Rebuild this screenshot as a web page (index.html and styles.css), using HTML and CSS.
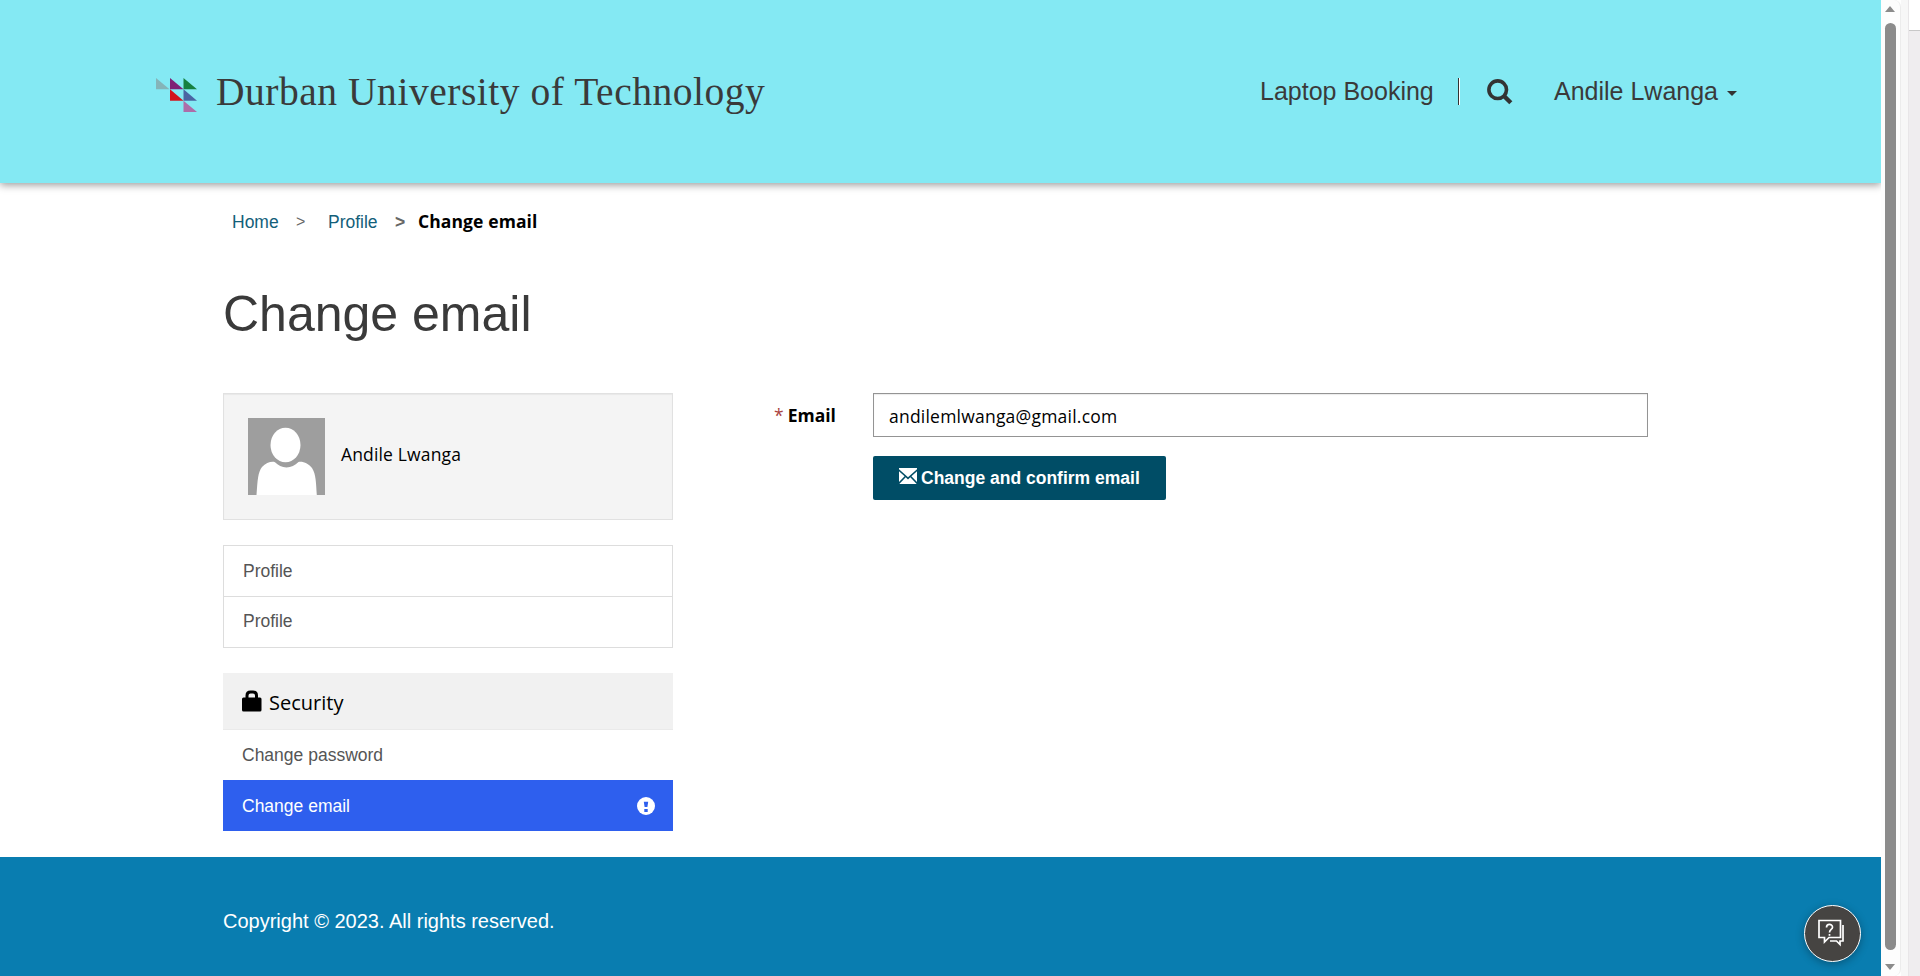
FILE: index.html
```
<!DOCTYPE html>
<html lang="en">
<head>
<meta charset="utf-8">
<title>Change email</title>
<link rel="stylesheet" href="styles.css">
</head>
<body>
<div class="window">
  <div class="page">
    <header class="header">
      <a class="brand">
        <svg class="brand-logo" width="41" height="34" viewBox="0 0 41 34">
          <path fill="#85b4b8" d="M0 0L13.5 11.3H0z"/>
          <path fill="#7f2176" d="M14 0L27.5 11.3H14z"/>
          <path fill="#168040" d="M27.5 0L41 11.3H27.5z"/>
          <path fill="#d2151c" d="M14 11.3L27.5 22.8H14z"/>
          <path fill="#4a64a2" d="M27.5 11.3L41 22.8H27.5z"/>
          <path fill="#ad6da9" d="M27.5 22.8L41 34H27.5z"/>
        </svg>
        <span class="brand-name">Durban University of Technology</span>
      </a>
      <nav class="nav">
        <a class="nav-booking">Laptop Booking</a>
        <span class="nav-divider"></span>
        <svg class="nav-search" width="26" height="26" viewBox="0 0 26 26" fill="none" stroke="#333"><circle cx="10.7" cy="10.7" r="8.8" stroke-width="3.6"/><path d="M17 17l6.8 6.8" stroke-width="4.4"/></svg>
        <a class="nav-user">Andile Lwanga</a>
        <span class="caret"></span>
      </nav>
    </header>
    <main class="content">
      <div class="crumbs">
        <a class="crumb-home">Home</a><span class="crumb-sep">&gt;</span><a class="crumb-profile">Profile</a><span class="crumb-sep-bold">&gt;</span><span class="crumb-current">Change email</span>
      </div>
      <h1 class="title">Change email</h1>
      <div class="columns">
        <aside class="side">
          <div class="user-card">
            <svg class="avatar" width="77" height="77" viewBox="0 0 77 77"><path fill="#9e9e9e" d="M0 0h77v77H0z"/><ellipse cx="37.5" cy="27" rx="15" ry="17.2" fill="#fff"/><path fill="#fff" d="M8.5 77C9.5 62 10 54 14 49c4-4.500 10-6 13-4.800C30 47 34 49.500 38.500 49.500S47 47 50.500 44C55 43 61 46 64 50c4 6 4 15 4.800 27z"/></svg>
            <span class="user-name">Andile Lwanga</span>
          </div>
          <div class="list">
            <a class="list-item">Profile</a>
            <a class="list-item">Profile</a>
          </div>
          <div class="security">
            <div class="security-head">
              <svg width="20" height="22" viewBox="0 0 20 22"><path fill="none" stroke="#000" stroke-width="3" d="M5 9V5.500Q5 2 8.500 2h2.500Q14.500 2 14.500 5.500V9"/><rect y="7.500" width="19.500" height="14" rx="1.500"/></svg>
              <span class="security-title">Security</span>
            </div>
            <a class="security-item">Change password</a>
            <a class="security-item active"><span class="active-text">Change email</span>
              <svg width="18" height="18" viewBox="0 0 18 18"><circle cx="9" cy="9" r="9" fill="#fff"/><path fill="#2e5fee" d="M6.800 4.800h4.400l-.8 5.200H7.600zM7.300 12h3.400v3H7.300z"/></svg>
            </a>
          </div>
        </aside>
        <form class="form">
          <label class="label"><span class="required">*</span> <span class="label-text">Email</span></label>
          <div class="fields">
            <div class="input"><span class="input-text">andilemlwanga@gmail.com</span></div>
            <div class="button">
              <svg width="18" height="16" viewBox="0 0 18 16" fill="#fff"><path d="M0 0h18v1.300L9 9.300 0 1.300zM0 3.300l5.600 5L0 14zM18 3.300l-5.600 5L18 14zM6.700 9.300L9 11.400l2.300-2.100L17.700 16H.3z"/></svg>
              <span class="button-text">Change and confirm email</span>
            </div>
          </div>
        </form>
      </div>
    </main>
    <footer class="footer">Copyright © 2023. All rights reserved.</footer>
    <div class="chat">
      <svg class="chat-icon" width="28" height="28" viewBox="0 0 28 28" fill="none" stroke="#fff" stroke-width="1.700"><path d="M2 1.500h21.500v17H12L7.500 23v-4.500H2z"/><path d="M26 6v16h-3v3.500L19.500 22H13"/><path d="M9.500 8.500c0-4 6-4 6-.3 0 2.300-3 2.300-3 5.300"/><path d="M12.500 15v1.800"/></svg>
    </div>
  </div>
  <div class="scrollbar">
    <span class="arrow-up"></span><span class="thumb"></span><span class="arrow-down"></span>
  </div>
  <div class="gutter"></div>
  <div class="neighbour"><div class="neighbour-top"></div></div>
</div>
</body>
</html>
```
FILE: styles.css
```
* { box-sizing: border-box; }
body { margin: 0; font-family: "Liberation Sans", Arial, sans-serif; font-size: 17.5px; color: #000; background: #fff; overflow: hidden; }
.window { display: flex; height: 976px; }
.page { position: relative; width: 1881px; display: flex; flex-direction: column; overflow: hidden; }
.header { z-index: 1; height: 183px; flex: none; display: flex; justify-content: space-between; padding: 0 144px 0 156px; background: #84e9f3; box-shadow: 0 2px 8px rgba(0,0,0,.4); color: #3a3a3a; }
.brand { display: flex; height: 183px; }
.brand-logo { margin-top: 78px; }
.brand-name { margin: 67px 0 0 19px; font: 39.5px/50px Georgia, "Liberation Serif", serif; letter-spacing: .53px; white-space: nowrap; }
.nav { display: flex; align-items: flex-start; font-size: 25px; line-height: 30px; white-space: nowrap; }
.nav-booking { width: 198px; margin-top: 76px; }
.nav-divider { width: 2px; height: 27px; margin-top: 78px; background: #333; border-right: 1px solid #fff; }
.nav-search { margin: 79px 41px 0 27px; }
.nav-user { width: 173px; margin-top: 76px; }
.caret { border: 5px solid transparent; border-top-color: #333; border-bottom: 0; margin-top: 91px; }
.content { flex: 1; padding: 0 233px 0 223px; background: #fff; }
.crumbs { display: flex; padding: 26px 0 0 9px; line-height: 26px; height: 51px; white-space: nowrap; color: #666; }
.crumb-home, .crumb-profile { color: #13607a; }
.crumb-home { width: 64px; }
.crumb-sep { width: 32px; font-size: 16px; }
.crumb-profile { width: 67px; }
.crumb-sep-bold { width: 23px; font-weight: bold; }
.crumb-current { margin-top: -1px; color: #000; font-family: "Open Sans", "Noto Sans", sans-serif; font-weight: bold; letter-spacing: .1px; }
.title { margin: 50px 0 0; font-size: 50px; line-height: 60px; font-weight: normal; color: #3a3a3a; }
.columns { display: flex; margin-top: 49px; }
.side { width: 450px; flex: none; }
.user-card { display: flex; align-items: center; height: 127px; padding-left: 24px; gap: 16px; background: #f4f4f4; border: 1px solid #e1e1e1; box-shadow: inset 0 1px 1px rgba(0,0,0,.05); }
.user-name, .security-title, .input-text { font-family: "Open Sans", "Noto Sans", sans-serif; letter-spacing: .15px; }
.user-name { margin-top: -6px; }
.input-text { letter-spacing: .22px; }
.list { margin-top: 25px; border: 1px solid #ddd; color: #555; }
.list-item { display: block; height: 50px; padding: 15px 0 0 19px; line-height: 20px; }
.list-item + .list-item { height: 51px; border-top: 1px solid #ddd; padding-top: 14px; }
.security { margin-top: 25px; }
.security-head { display: flex; align-items: flex-start; height: 57px; padding: 17px 19px; gap: 7px; background: #f1f1f1; border-bottom: 1px solid #eaeaea; }
.security-title { font-size: 20px; line-height: 26px; letter-spacing: 0; }
.security-item { display: flex; align-items: center; justify-content: space-between; height: 50px; padding: 0 18px 0 19px; color: #555; }
.active { height: 51px; background: #2e5fee; color: #fff; }
.active-text { padding-top: 2px; }
.form { display: flex; flex: 1; padding-left: 101px; }
.label { width: 99px; padding-top: 9px; line-height: 26px; white-space: nowrap; font-family: "Open Sans", "Noto Sans", sans-serif; font-weight: bold; }
.required { color: #a94442; font-weight: normal; letter-spacing: -.5px; }
.fields { width: 775px; }
.input { height: 44px; border: 1px solid #949494; padding-left: 15px; line-height: 44px; box-shadow: inset 0 1px 1px rgba(0,0,0,.08); }
.button { display: flex; align-items: center; width: 293px; height: 44px; margin-top: 19px; padding-left: 26px; gap: 4px; background: #004d66; border-radius: 2px; color: #fff; font-weight: bold; white-space: nowrap; }
.button svg { margin-top: -4px; }
.footer { flex: none; height: 119px; padding: 51px 0 0 223px; background: #097db0; color: #fff; font-size: 20px; line-height: 26px; }
.chat { position: absolute; left: 1804px; top: 905px; width: 57px; height: 57px; border: 1px solid #fff; border-radius: 50%; background: #464442; display: grid; place-items: center; box-shadow: 0 2px 8px rgba(0,0,0,.3); }
.chat-icon { margin: 0 4px 1px 0; }
.scrollbar { width: 20px; display: flex; flex-direction: column; padding: 6px 0 6px 4px; background: #fdfdfd; border-right: 1px solid #ececec; border-radius: 0 7px 7px 0; }
.arrow-up, .arrow-down { width: 0; border: 5.5px solid transparent; }
.arrow-up { border-bottom: 6px solid #8b8b8b; border-top: 0; }
.arrow-down { border-top: 6px solid #8b8b8b; border-bottom: 0; }
.thumb { width: 11px; flex: 1; margin: 11px 0 14px; border-radius: 6px; background: #8b8b8b; }
.gutter { width: 8px; background: #f7f7f7; border-right: 1px solid #e8e6e8; }
.neighbour { flex: 1; background: #efedef; }
.neighbour-top { height: 31px; background: #fff; border-bottom: 1px solid #c8c8c8; }
```
